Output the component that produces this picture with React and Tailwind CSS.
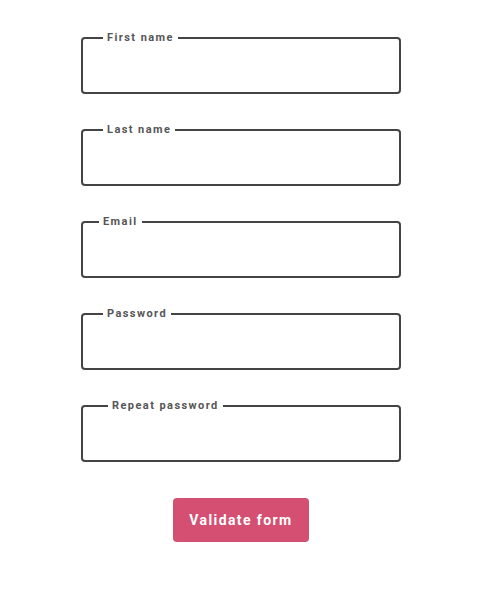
import React from "react";

const fields = [
    { label: "First name", offset: "ml-[20px]" },
    { label: "Last name", offset: "ml-[20px]" },
    { label: "Email", offset: "ml-[16px]" },
    { label: "Password", offset: "ml-[20px]" },
    { label: "Repeat password", offset: "ml-[25px]" },
];

const App = () => {
    return (
        <div className="w-[482px] h-[600px] bg-white font-['Roboto',sans-serif]">
            <form className="w-[320px] mx-auto pt-[32px] flex flex-col">
                <div className="flex flex-col gap-[30px]">
                    {fields.map((f) => (
                        <fieldset
                            key={f.label}
                            className="border-2 border-[#444] rounded-[4px] h-[62px] m-0 p-0"
                        >
                            <legend
                                className={`${f.offset} px-[4px] text-[11px] leading-[12px] font-bold tracking-[0.13em] text-[#555]`}
                            >
                                {f.label}
                            </legend>
                        </fieldset>
                    ))}
                </div>

                <div className="flex justify-center mt-[36px]">
                    <button
                        type="button"
                        className="w-[136px] h-[44px] rounded-[4px] bg-[#d44f72] text-white text-[14px] font-bold tracking-[0.1em]"
                    >
                        Validate form
                    </button>
                </div>
            </form>
        </div>
    );
};

export default App;
